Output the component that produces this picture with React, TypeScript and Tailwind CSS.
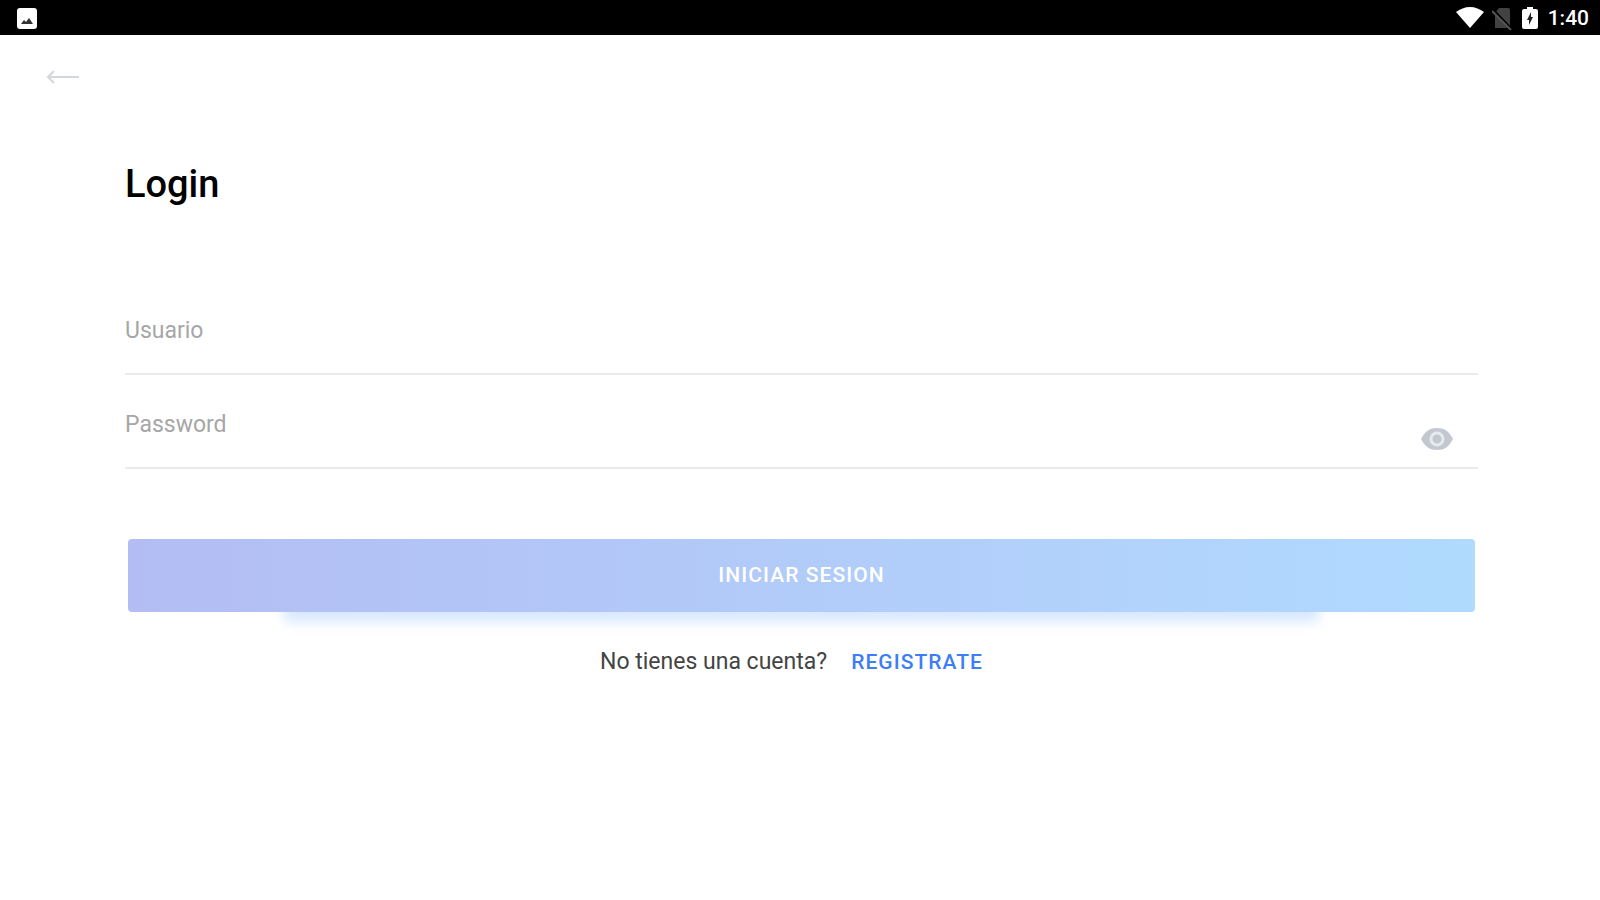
function StatusBar() {
    return (
        <header className="flex h-[35px] items-center justify-between bg-black pl-4 pr-[11px] text-white">
            <svg className="size-6" viewBox="0 0 24 24" fill="none">
                <rect x="1" y="2" width="20" height="21" rx="3" fill="#fff" />
                <path d="M5 18l3-4 2 2 3-4 4 6z" fill="#333" />
            </svg>

            <div className="flex items-center">
                {/* Wifi */}
                <svg className="mr-2 h-6 w-7" viewBox="0 0 28 24" fill="#fff">
                    <path d="M0 6C4 3 9 1 14 1s10 2 14 5L14 22z" />
                </svg>
                {/* No SIM */}
                <svg className="mr-2.5 h-6 w-5" viewBox="0 0 20 24" fill="none">
                    <path d="M7 2h9q2 0 2 2v18H3V7z" fill="#424242" />
                    <path d="M0 3l19 20" stroke="#000" strokeWidth="3" />
                    <path d="M0 5l19 19" stroke="#555" strokeWidth="2" />
                </svg>
                {/* Battery */}
                <svg className="mr-2.5 h-6 w-4" viewBox="0 0 16 24" fill="none">
                    <path d="M5 1h6v2h3q2 0 2 2v16q0 2-2 2H2q-2 0-2-2V5q0-2 2-2h3z" fill="#fff" />
                    <path d="M9 6L5 14h2v5l4-8H9z" fill="#222" />
                </svg>
                <span className="text-[21px] leading-6 font-medium">1:40</span>
            </div>
        </header>
    );
}

export default function App() {
    return (
        <div className="min-h-screen bg-white font-['Roboto',sans-serif] text-black">
            <StatusBar />

            <nav className="flex px-11 pt-8">
                <button type="button" aria-label="Volver" className="h-5 w-9">
                    <svg className="h-5 w-9" viewBox="0 0 36 20" fill="none" stroke="#d3d7db" strokeWidth="2">
                        <path d="M4 10h31M10 4L4 10l6 6" />
                    </svg>
                </button>
            </nav>

            <main className="pt-[73px] pr-[122px] pl-[125px]">
                <h1 className="text-[38px] leading-[48px] font-medium">Login</h1>

                <form className="mt-[91px]" onSubmit={(e) => e.preventDefault()}>
                    <div className="flex h-[76px] items-start border-b-2 border-[#ebebeb]">
                        <input
                            type="text"
                            aria-label="Usuario"
                            placeholder="Usuario"
                            className="h-[62px] w-full text-[23px] outline-none placeholder:text-[#a6a6a6]"
                        />
                    </div>

                    <div className="mt-[18px] flex h-[76px] items-start border-b-2 border-[#ebebeb]">
                        <input
                            type="password"
                            aria-label="Password"
                            placeholder="Password"
                            className="h-[62px] min-w-0 flex-1 text-[23px] outline-none placeholder:text-[#a6a6a6]"
                        />
                        <button type="button" aria-label="Mostrar password" className="mr-6 self-end pb-4">
                            <svg className="h-6 w-[34px]" viewBox="0 0 34 24" fill="none">
                                <path d="M1 12C5 4 10 1 17 1s12 3 16 11c-4 8-9 11-16 11S5 20 1 12z" fill="#c3c8d0" />
                                <circle cx="17" cy="12" r="6" stroke="#e6eaef" strokeWidth="3" />
                                <circle cx="17" cy="12" r="3" fill="#c3c8d0" />
                            </svg>
                        </button>
                    </div>

                    <div className="relative mx-[3px] mt-[70px]">
                        {/* Soft glow below the button */}
                        <div className="absolute inset-x-[156px] -bottom-2.5 h-8 rounded bg-[#d8e8ff] blur-[6px]" />
                        <button
                            type="submit"
                            className="relative h-[73px] w-full rounded bg-linear-to-r from-[#b3bdf3] to-[#b0daff] text-[21px] font-medium tracking-wider text-white"
                        >
                            INICIAR SESION
                        </button>
                    </div>
                </form>

                <p className="mt-9 flex items-center justify-center gap-6 pr-5 text-[23px] leading-7 text-[#444]">
                    No tienes una cuenta?
                    <a href="#registro" className="text-[21px] font-medium tracking-wider text-[#3d7df5]">
                        REGISTRATE
                    </a>
                </p>
            </main>
        </div>
    );
}
